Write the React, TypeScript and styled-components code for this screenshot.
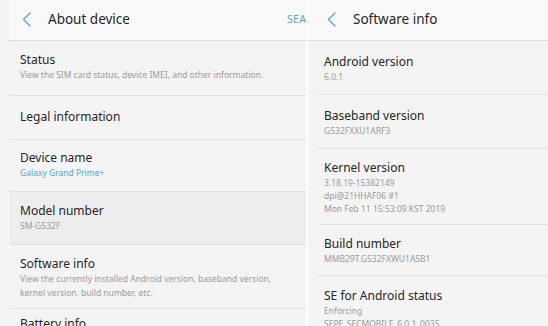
import styled, { createGlobalStyle } from "styled-components";

const GlobalStyle = createGlobalStyle`
  html, body {
    margin: 0;
    padding: 0;
    background: #ffffff;
  }
  body {
    font-family: "Noto Sans", "DejaVu Sans", sans-serif;
  }
`;

const colors = {
  bodyBg: "#f4f4f4",
  headerBg: "#f9f9f9",
  pressed: "#ededed",
  divider: "#e2e2e2",
  title: "#262626",
  sub: "#9b9b9b",
  accent: "#52a9cc",
};

const Screen = styled.div`
  display: flex;
  gap: 2px;
  width: 548px;
  height: 326px;
  overflow: hidden;
  background: #ffffff;
`;

const Panel = styled.section<{ $width?: number }>`
  ${(p) => (p.$width ? `width: ${p.$width}px;` : "flex: 1;")}
  flex-shrink: 0;
  height: 100%;
  background: ${colors.bodyBg};
  overflow: hidden;
  display: flex;
  flex-direction: column;
`;

const Header = styled.header<{ $inset: number; $lead: number }>`
  height: 40px;
  flex-shrink: 0;
  display: flex;
  align-items: center;
  background: ${colors.headerBg};
  border-bottom: 1px solid #dcdcdc;
  margin-left: ${(p) => p.$inset}px;
  padding-left: ${(p) => p.$lead}px;
  white-space: nowrap;
`;

const BackButton = styled.span`
  display: flex;
  align-items: center;
  width: 26px;
  flex-shrink: 0;
  margin-top: -2px;
`;

const HeaderTitle = styled.h1`
  margin: 0;
  flex: 1;
  font-size: 13.5px;
  font-weight: 400;
  color: ${colors.title};
  margin-top: -2px;
`;

const HeaderAction = styled.span`
  font-size: 10.5px;
  color: ${colors.accent};
  letter-spacing: 0.3px;
  margin-right: -22px;
  margin-top: -2px;
`;

const List = styled.div<{ $inset: number }>`
  margin-left: ${(p) => p.$inset}px;
  display: flex;
  flex-direction: column;
`;

const Row = styled.div<{ $pad: number; $bottom?: number; $pressed?: boolean; $indent: number }>`
  padding: ${(p) => p.$pad}px 0 ${(p) => p.$bottom ?? p.$pad}px ${(p) => p.$indent}px;
  border-bottom: 1px solid ${colors.divider};
  background: ${(p) => (p.$pressed ? colors.pressed : "transparent")};
  white-space: nowrap;
`;

const RowTitle = styled.div`
  font-size: 12px;
  line-height: 16px;
  color: ${colors.title};
`;

const RowSub = styled.div<{ $accent?: boolean; $lh?: number }>`
  font-size: 8.5px;
  line-height: ${(p) => p.$lh ?? 14}px;
  color: ${(p) => (p.$accent ? colors.accent : colors.sub)};
`;

function Chevron() {
  return (
    <svg width="9" height="15" viewBox="0 0 9 15">
      <path
        d="M8 1 L1.5 7.5 L8 14"
        fill="none"
        stroke={colors.accent}
        strokeWidth="1.4"
        strokeLinecap="round"
        strokeLinejoin="round"
      />
    </svg>
  );
}

type Item = {
  title: string;
  lines?: string[];
  accent?: boolean;
  pressed?: boolean;
  pad: number;
  bottom?: number;
};

const aboutItems: Item[] = [
  {
    title: "Status",
    lines: ["View the SIM card status, device IMEI, and other information."],
    pad: 11,
    bottom: 13,
  },
  { title: "Legal information", pad: 13, bottom: 14 },
  { title: "Device name", lines: ["Galaxy Grand Prime+"], accent: true, pad: 10, bottom: 11 },
  { title: "Model number", lines: ["SM-G532F"], pressed: true, pad: 11 },
  {
    title: "Software info",
    lines: [
      "View the currently installed Android version, baseband version,",
      "kernel version, build number, etc.",
    ],
    pad: 11,
    bottom: 8,
  },
  { title: "Battery info", pad: 7 },
];

const softwareItems: Item[] = [
  { title: "Android version", lines: ["6.0.1"], pad: 13, bottom: 11 },
  { title: "Baseband version", lines: ["G532FXXU1ARF3"], pad: 13, bottom: 11 },
  {
    title: "Kernel version",
    lines: ["3.18.19-15382149", "dpi@21HHAF06 #1", "Mon Feb 11 15:53:09 KST 2019"],
    pad: 11,
    bottom: 9,
  },
  { title: "Build number", lines: ["MMB29T.G532FXWU1ASB1"], pad: 11, bottom: 10 },
  { title: "SE for Android status", lines: ["Enforcing", "SEPF_SECMOBILE_6.0.1_0035"], pad: 12 },
];

function ItemList({ items, inset, indent, lh }: { items: Item[]; inset: number; indent: number; lh?: number }) {
  return (
    <List $inset={inset}>
      {items.map((it) => (
        <Row key={it.title} $pad={it.pad} $bottom={it.bottom} $pressed={it.pressed} $indent={indent}>
          <RowTitle>{it.title}</RowTitle>
          {it.lines?.map((l) => (
            <RowSub key={l} $accent={it.accent} $lh={lh}>
              {l}
            </RowSub>
          ))}
        </Row>
      ))}
    </List>
  );
}

export default function App() {
  return (
    <>
      <GlobalStyle />
      <Screen>
        <Panel $width={306}>
          <Header $inset={9} $lead={13}>
            <BackButton>
              <Chevron />
            </BackButton>
            <HeaderTitle>About device</HeaderTitle>
            <HeaderAction>SEARCH</HeaderAction>
          </Header>
          <ItemList items={aboutItems} inset={10} indent={10} />
        </Panel>
        <Panel>
          <Header $inset={0} $lead={19}>
            <BackButton>
              <Chevron />
            </BackButton>
            <HeaderTitle>Software info</HeaderTitle>
          </Header>
          <ItemList items={softwareItems} inset={10} indent={6} lh={13} />
        </Panel>
      </Screen>
    </>
  );
}
